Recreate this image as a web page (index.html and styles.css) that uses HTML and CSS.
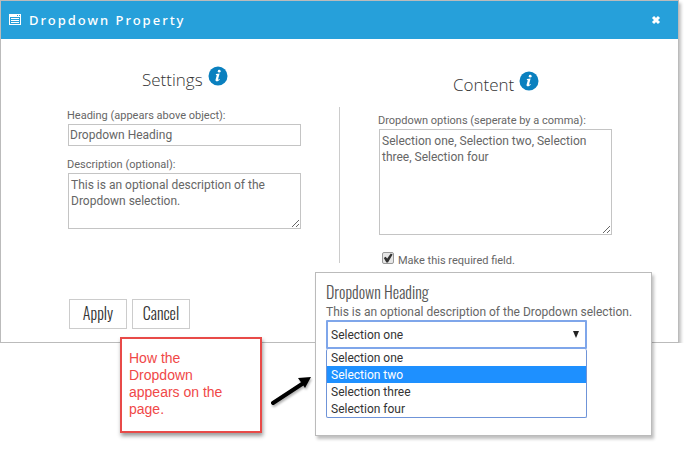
FILE: index.html
```html
<!DOCTYPE html>
<html lang="en-US">
<head>
	<meta charset="utf-8">
	<meta name="viewport" content="width=device-width, initial-scale=1.0">
	<title>Dropdown Property</title>
	<link rel="stylesheet" href="styles.css">
</head>
<body>

	<form class="dialog">
		<header class="titlebar">
			<svg class="window-icon" width="12" height="12" viewBox="0 0 12 12" aria-hidden="true">
				<path fill="#fff" d="M0 0h12v11H0z"/>
				<path fill="#26a0da" d="M1 3h10v7H1zM8 1h1v1H8zM10 1h1v1h-1z"/>
				<path fill="#fff" d="M2 4h8v1H2zM2 6h8v1H2zM2 8h8v1H2z"/>
			</svg>
			<h1>Dropdown Property</h1>
			<button type="button" class="close" aria-label="Close">
				<svg width="10" height="10" viewBox="0 0 10 10" aria-hidden="true">
					<path d="M2 2l6 6M8 2l-6 6" stroke="#fff" stroke-width="3"/>
				</svg>
			</button>
		</header>

		<div class="columns">
			<section class="settings">
				<h2>Settings
					<svg class="info" width="20" height="20" viewBox="0 0 20 20" aria-hidden="true">
						<circle cx="10" cy="10" r="9.5" fill="#0a80bf"/>
						<circle cx="11.2" cy="5.2" r="1.4" fill="#fff"/>
						<path fill="#fff" d="M8 8l3.6-.4-1.5 5.7c-.1.5.3.5 1.4-.4l.4.5c-1 1.2-2 1.8-3 1.8-1.2 0-1.6-.7-1.3-1.8L8.8 9.2 7.8 9z"/>
					</svg>
				</h2>
				<label for="heading">Heading (appears above object):</label>
				<input type="text" id="heading" value="Dropdown Heading">
				<label for="description">Description (optional):</label>
				<textarea id="description" class="short">This is an optional description of the Dropdown selection.</textarea>
			</section>

			<div class="divider"></div>

			<section class="content">
				<h2>Content
					<svg class="info" width="20" height="20" viewBox="0 0 20 20" aria-hidden="true">
						<circle cx="10" cy="10" r="9.5" fill="#0a80bf"/>
						<circle cx="11.2" cy="5.2" r="1.4" fill="#fff"/>
						<path fill="#fff" d="M8 8l3.6-.4-1.5 5.7c-.1.5.3.5 1.4-.4l.4.5c-1 1.2-2 1.8-3 1.8-1.2 0-1.6-.7-1.3-1.8L8.8 9.2 7.8 9z"/>
					</svg>
				</h2>
				<label for="options">Dropdown options (seperate by a comma):</label>
				<textarea id="options" class="tall">Selection one, Selection two, Selection three, Selection four</textarea>
				<div class="required">
					<input type="checkbox" id="required" checked>
					<label for="required">Make this required field.</label>
				</div>
			</section>
		</div>

		<div class="actions">
			<button type="submit">Apply</button>
			<button type="button">Cancel</button>
		</div>
	</form>

	<aside class="note">How the Dropdown appears on the page.</aside>

	<svg class="arrow" width="48" height="38" viewBox="0 0 48 38" aria-hidden="true">
		<path d="M5 30L34 11" stroke="#000" stroke-width="4" stroke-linecap="round"/>
		<path d="M43 4L37 15 30 5z"/>
	</svg>

	<section class="preview">
		<h3>Dropdown Heading</h3>
		<label for="selection">This is an optional description of the Dropdown selection.</label>
		<div class="picker">
			<select id="selection">
				<option>Selection one</option>
				<option>Selection two</option>
				<option>Selection three</option>
				<option>Selection four</option>
			</select>
			<svg class="caret" width="8" height="7" viewBox="0 0 8 7" aria-hidden="true"><path d="M1 0h6L4 7z" fill="#222"/></svg>
		</div>
		<select class="list" size="4" aria-label="Selection list">
			<option>Selection one</option>
			<option class="active">Selection two</option>
			<option>Selection three</option>
			<option>Selection four</option>
		</select>
	</section>

</body>
</html>
```
FILE: styles.css
```css
* {
	box-sizing: border-box;
}
body {
	margin: 0;
	background: #fff;
	color: #666;
	font-family: Roboto, "Open Sans", sans-serif;
	font-size: 11px;
}
h1, h2, h3 {
	margin: 0;
	font-weight: 400;
}
input, textarea, select, button {
	margin: 0;
	font-family: inherit;
	color: inherit;
}

/* dialog */
.dialog {
	margin-right: 7px;
	border: 1px solid #bbb;
	background: #fff;
	box-shadow: 2px 3px 3px rgba(0,0,0,0.25);
}
.titlebar {
	display: flex;
	align-items: center;
	height: 38px;
	padding: 0 17px 0 8px;
	background: #26a0da;
	color: #fff;
}
.titlebar h1 {
	flex: 1;
	padding-left: 8px;
	font-family: "Noto Sans", sans-serif;
	font-size: 13px;
	font-weight: 500;
	letter-spacing: 2px;
}
.close {
	display: flex;
	padding: 0;
	border: 0;
	background: none;
}
.columns {
	display: grid;
	grid-template-columns: 1fr 1px 1fr;
	padding-top: 27px;
}
.settings {
	padding-left: 66px;
}
.divider {
	margin: 41px 0 6px;
	background: #ccc;
}
.content {
	padding: 5px 0 0 38px;
}
h2 {
	display: flex;
	gap: 5px;
	padding-left: 75px;
	height: 42px;
	font-family: "Open Sans", sans-serif;
	font-weight: 300;
	font-size: 17px;
	line-height: 28px;
	color: #333;
}
.columns label {
	display: block;
	line-height: 16px;
}
.columns input[type=text],
textarea {
	display: block;
	width: 233px;
	margin-left: 1px;
	border: 1px solid #c4c4c4;
	background: #fff;
	font-size: 12px;
}
.columns input[type=text] {
	height: 22px;
	margin-bottom: 11px;
	padding: 0 1px;
}
textarea {
	padding: 3px 2px;
	line-height: 16px;
}
.short {
	height: 56px;
}
.tall {
	height: 106px;
}
.required {
	display: flex;
	align-items: flex-start;
	gap: 4px;
	padding: 17px 0 0 4px;
}
.required label {
	padding-top: 1px;
}
.required input {
	appearance: none;
	width: 12px;
	height: 12px;
	border: 1px solid #999;
	border-radius: 2px;
	background: #e6e6e6;
}
.required input:checked::before {
	content: "";
	display: block;
	height: 10px;
	background: #333;
	clip-path: polygon(8% 50%, 26% 38%, 42% 56%, 78% 4%, 96% 16%, 50% 94%, 34% 94%);
}
.actions {
	display: flex;
	gap: 5px;
	padding: 30px 0 13px 68px;
}
.actions button {
	width: 58px;
	height: 30px;
	padding: 0 0 2px;
	border: 1px solid #ccc;
	background: #fff;
	color: #333;
	font-family: Oswald, "Liberation Sans Narrow", sans-serif;
	font-weight: 300;
	font-size: 16px;
}

/* annotation */
.note {
	position: absolute;
	top: 337px;
	left: 120px;
	width: 142px;
	padding: 11px 30px 13px 7px;
	border: 2px solid #e84a48;
	background: #fff;
	box-shadow: 1px 3px 4px rgba(0,0,0,0.4);
	color: #f04848;
	font-family: "Liberation Sans", Arial, sans-serif;
	font-size: 14px;
	line-height: 17px;
}
.arrow {
	position: absolute;
	top: 373px;
	left: 268px;
	filter: drop-shadow(1px 2px 1px rgba(0,0,0,0.3));
}

/* how the field looks on the page */
.preview {
	position: absolute;
	top: 272px;
	left: 315px;
	width: 337px;
	padding: 7px 10px 17px;
	border: 1px solid #bbb;
	background: #fff;
	box-shadow: 2px 3px 3px rgba(0,0,0,0.25);
}
.preview h3 {
	color: #555;
	font-family: Oswald, "Liberation Sans Narrow", sans-serif;
	font-weight: 300;
	font-size: 16px;
	line-height: 25px;
}
.preview label {
	display: block;
	font-size: 12px;
	line-height: 15px;
	white-space: nowrap;
}
.picker {
	position: relative;
	width: 261px;
}
.picker select {
	display: block;
	appearance: none;
	width: 100%;
	height: 29px;
	padding: 0 3px;
	border: 2px solid #7fa6ea;
	border-radius: 1px;
	background: #fff;
	color: #333;
	font-size: 12px;
}
.caret {
	position: absolute;
	top: 11px;
	right: 7px;
	pointer-events: none;
}
.list {
	display: block;
	width: 261px;
	padding: 0;
	border: 1px solid #6f94d8;
	border-top: 0;
	background: #fff;
	color: #333;
	font-size: 12px;
	overflow: hidden;
}
.list option {
	height: 17px;
	min-height: 17px;
	padding: 2px 4px 0;
	line-height: 15px;
}
.list .active {
	background: #1e90ff;
	color: #fff;
}
```
